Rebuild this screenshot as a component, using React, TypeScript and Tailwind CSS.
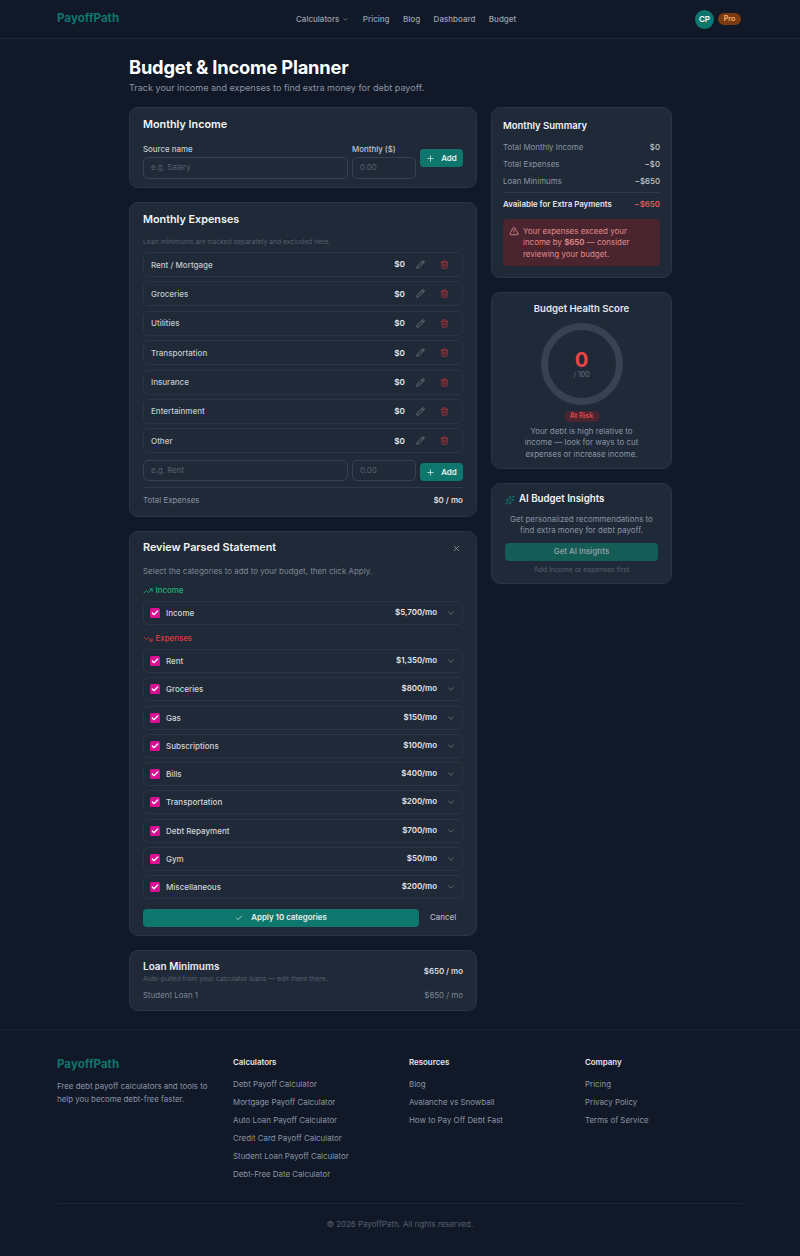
import React from 'react';
import { AlertTriangle, Check, ChevronDown, Pencil, Plus, Sparkles, Trash2, TrendingDown, TrendingUp, X } from 'lucide-react';

const EXPENSES = ['Rent / Mortgage', 'Groceries', 'Utilities', 'Transportation', 'Insurance', 'Entertainment', 'Other'];

const PARSED = [
  { name: 'Rent', amount: '$1,350/mo' },
  { name: 'Groceries', amount: '$800/mo' },
  { name: 'Gas', amount: '$150/mo' },
  { name: 'Subscriptions', amount: '$100/mo' },
  { name: 'Bills', amount: '$400/mo' },
  { name: 'Transportation', amount: '$200/mo' },
  { name: 'Debt Repayment', amount: '$700/mo' },
  { name: 'Gym', amount: '$50/mo' },
  { name: 'Miscellaneous', amount: '$200/mo' },
];

const FOOTER_LINKS = [
  {
    title: 'Calculators',
    links: ['Debt Payoff Calculator', 'Mortgage Payoff Calculator', 'Auto Loan Payoff Calculator', 'Credit Card Payoff Calculator', 'Student Loan Payoff Calculator', 'Debt-Free Date Calculator'],
  },
  { title: 'Resources', links: ['Blog', 'Avalanche vs Snowball', 'How to Pay Off Debt Fast'] },
  { title: 'Company', links: ['Pricing', 'Privacy Policy', 'Terms of Service'] },
];

const Card: React.FC<{ className?: string; children: React.ReactNode }> = ({ className = '', children }) => (
  <div className={`bg-[#1f2937] border border-[#2a3544] rounded-[9px] ${className}`}>{children}</div>
);

const AddButton = () => (
  <button className="flex items-center justify-center gap-[6px] w-[43px] h-[18px] bg-[#0f766e] rounded-[4px] text-[8px] font-semibold text-[#e5f3f0] shrink-0">
    <Plus className="w-[9px] h-[9px]" />
    Add
  </button>
);

const ParsedRow: React.FC<{ name: string; amount: string }> = ({ name, amount }) => (
  <div className="flex items-center h-[24px] border border-[#2a3544] rounded-[5px] pl-[6px] pr-[6px]">
    <span className="flex items-center justify-center w-[10px] h-[10px] bg-[#db0f94] rounded-[1.5px] shrink-0">
      <Check className="w-[8px] h-[8px] text-white" strokeWidth={4} />
    </span>
    <span className="ml-[6px] text-[8px] font-medium text-[#d1d5db]">{name}</span>
    <span className="ml-auto text-[7.9px] font-semibold text-[#e5e7eb]">{amount}</span>
    <ChevronDown className="ml-[9px] w-[10px] h-[10px] text-[#6b7280]" />
  </div>
);

export default function App() {
  return (
    <div className="w-[800px] h-[1256px] overflow-hidden bg-[#111827] font-['Inter',sans-serif] text-[#e5e7eb]">
      <header className="flex items-center h-[39px] px-[57px] border-b border-[#1e2736] relative">
        <span className="text-[11.6px] font-bold text-[#0f766e] w-[239px]">PayoffPath</span>
        <nav className="flex items-center gap-[13.5px] text-[8px] font-medium text-[#9ca3af]">
          <span className="flex items-center gap-[3px]">Calculators <ChevronDown className="w-[7px] h-[7px]" /></span>
          <span>Pricing</span>
          <span>Blog</span>
          <span>Dashboard</span>
          <span>Budget</span>
        </nav>
        <div className="ml-auto mr-[2px] flex items-center gap-[4px]">
          <span className="flex items-center justify-center w-[19px] h-[19px] rounded-full bg-[#0f766e] text-[8px] font-semibold text-white">CP</span>
          <span className="flex items-center justify-center w-[23px] h-[12px] rounded-full bg-[#7c3a10] text-[7px] font-semibold text-[#fdba74]">Pro</span>
        </div>
      </header>

      <main className="w-[543px] ml-[129px] pt-[18px]">
        <h1 className="text-[18.3px] leading-[20px] font-bold text-white tracking-[-0.2px]">Budget &amp; Income Planner</h1>
        <p className="mt-[4px] text-[9.05px] leading-[13px] text-[#8b95a5]">Track your income and expenses to find extra money for debt payoff.</p>

        <div className="flex gap-[14px] mt-[13px] items-start">
          <div className="w-[348px] flex flex-col gap-[14px]">
            <Card className="h-[81px] px-[13px] pt-[10px]">
              <h2 className="text-[10.8px] leading-[14px] font-semibold text-[#f3f4f6]">Monthly Income</h2>
              <div className="flex items-end mt-[12px]">
                <div className="w-[205px]">
                  <label className="block text-[7.9px] leading-[10px] font-medium text-[#c4c9d1] mb-[3px]">Source name</label>
                  <div className="h-[22px] border border-[#374151] rounded-[5px] flex items-center px-[7px] text-[7.9px] text-[#566070]">e.g. Salary</div>
                </div>
                <div className="w-[64px] ml-[4px]">
                  <label className="block text-[7.9px] leading-[10px] font-medium text-[#c4c9d1] mb-[3px]">Monthly ($)</label>
                  <div className="h-[22px] border border-[#374151] rounded-[5px] flex items-center px-[7px] text-[7.9px] text-[#566070]">0.00</div>
                </div>
                <div className="ml-[4px] mb-[12px]"><AddButton /></div>
              </div>
            </Card>

            <Card className="h-[315px] px-[13px] pt-[10px]">
              <h2 className="text-[10.8px] leading-[14px] font-semibold text-[#f3f4f6]">Monthly Expenses</h2>
              <p className="mt-[10px] text-[6.8px] leading-[10px] text-[#566070]">Loan minimums are tracked separately and excluded here.</p>
              <div className="mt-[5px] flex flex-col gap-[4.4px]">
                {EXPENSES.map((name) => (
                  <div key={name} className="flex items-center h-[25px] border border-[#2a3544] rounded-[5px] px-[7px]">
                    <span className="text-[8px] font-medium text-[#c4c9d1]">{name}</span>
                    <span className="ml-auto text-[8.2px] font-semibold text-[#e5e7eb]">$0</span>
                    <Pencil className="ml-[11px] w-[9px] h-[9px] text-[#6b7280]" strokeWidth={2.5} />
                    <Trash2 className="ml-[15px] mr-[6px] w-[9px] h-[9px] text-[#a8323a]" strokeWidth={2.5} />
                  </div>
                ))}
              </div>
              <div className="flex items-start mt-[7px]">
                <div className="w-[205px] h-[21px] border border-[#374151] rounded-[5px] flex items-center px-[7px] text-[7.9px] text-[#566070]">e.g. Rent</div>
                <div className="w-[64px] ml-[4px] h-[21px] border border-[#374151] rounded-[5px] flex items-center px-[7px] text-[7.9px] text-[#566070]">0.00</div>
                <div className="ml-[4px] mt-[3px]"><AddButton /></div>
              </div>
              <div className="flex items-center justify-between mt-[6px] pt-[7px] border-t border-[#2f3a49]">
                <span className="text-[7.9px] leading-[11px] text-[#8b95a5]">Total Expenses</span>
                <span className="text-[8px] leading-[11px] font-semibold text-[#d9dde3]">$0 / mo</span>
              </div>
            </Card>

            <Card className="h-[405px] px-[13px] pt-[9px]">
              <div className="flex items-center justify-between h-[14px]">
                <h2 className="text-[10.8px] font-semibold text-[#f3f4f6]">Review Parsed Statement</h2>
                <X className="mr-[2px] w-[9px] h-[9px] text-[#9ca3af]" />
              </div>
              <p className="mt-[11px] text-[7.95px] leading-[11px] text-[#7d8796]">Select the categories to add to your budget, then click Apply.</p>
              <div className="mt-[9px] flex items-center gap-[2.5px] h-[10px] text-[7.9px] font-medium text-[#22b378]">
                <TrendingUp className="w-[10px] h-[10px]" /> Income
              </div>
              <div className="mt-[5px]"><ParsedRow name="Income" amount="$5,700/mo" /></div>
              <div className="mt-[9px] flex items-center gap-[2.5px] h-[10px] text-[7.9px] font-medium text-[#dc3f3f]">
                <TrendingDown className="w-[10px] h-[10px]" /> Expenses
              </div>
              <div className="mt-[5px] flex flex-col gap-[4.25px]">
                {PARSED.map((p) => <ParsedRow key={p.name} name={p.name} amount={p.amount} />)}
              </div>
              <div className="flex items-center mt-[10px]">
                <button className="flex items-center justify-center gap-[8px] w-[276px] h-[18px] bg-[#0f766e] rounded-[4px] text-[7.9px] font-semibold text-[#e5f3f0]">
                  <Check className="w-[8px] h-[8px]" /> Apply 10 categories
                </button>
                <span className="ml-[11px] text-[7.9px] font-medium text-[#b0b6bf]">Cancel</span>
              </div>
            </Card>

            <Card className="h-[61px] px-[13px] pt-[9px]">
              <div className="flex items-center justify-between">
                <div>
                  <h2 className="text-[10px] leading-[13px] font-semibold text-[#eef0f3]">Loan Minimums</h2>
                  <p className="mt-[1px] text-[6.8px] leading-[10px] text-[#566070]">Auto-pulled from your calculator loans — edit them there.</p>
                </div>
                <span className="text-[7.9px] font-semibold text-[#d9dde3]">$650 / mo</span>
              </div>
              <div className="flex items-center justify-between mt-[6px] text-[7.9px] leading-[11px] text-[#7d8796]">
                <span>Student Loan 1</span>
                <span>$650 / mo</span>
              </div>
            </Card>
          </div>

          <div className="w-[181px] flex flex-col gap-[14px]">
            <Card className="h-[171px] px-[11px] pt-[11px]">
              <h2 className="text-[9.5px] leading-[13px] font-semibold text-[#f3f4f6]">Monthly Summary</h2>
              <div className="mt-[7px] flex flex-col text-[7.9px] leading-[17px]">
                <div className="flex justify-between"><span className="text-[#8b95a5]">Total Monthly Income</span><span className="text-[#c4c9d1] font-medium">$0</span></div>
                <div className="flex justify-between"><span className="text-[#8b95a5]">Total Expenses</span><span className="text-[#c4c9d1] font-medium">−$0</span></div>
                <div className="flex justify-between"><span className="text-[#8b95a5]">Loan Minimums</span><span className="text-[#c4c9d1] font-medium">−$650</span></div>
              </div>
              <div className="flex justify-between mt-[2px] pt-[5px] border-t border-[#2f3a49] text-[7.9px] leading-[12px] font-semibold">
                <span className="text-[#e5e7eb]">Available for Extra Payments</span>
                <span className="text-[#e05a5a]">−$650</span>
              </div>
              <div className="flex gap-[4px] mt-[9px] h-[47px] rounded-[4px] bg-[#4a2530] px-[6px] pt-[7px] text-[7.95px] leading-[11.3px] text-[#e08a8a]">
                <AlertTriangle className="w-[10px] h-[10px] shrink-0" />
                <p>Your expenses exceed your income by <b className="font-semibold">$650</b> — consider reviewing your budget.</p>
              </div>
            </Card>

            <Card className="h-[177px] px-[11px] pt-[9px] flex flex-col items-center">
              <h2 className="text-[9.6px] leading-[13px] font-semibold text-[#e5e7eb]">Budget Health Score</h2>
              <div className="relative w-[82px] h-[82px] mt-[8px] rounded-full border-[7px] border-[#374151] flex flex-col items-center justify-center">
                <span className="text-[20px] leading-[20px] font-bold text-[#ef4444]">0</span>
                <span className="text-[7px] leading-[9px] text-[#6b7280]">/ 100</span>
              </div>
              <span className="mt-[6px] flex items-center justify-center w-[36px] h-[11px] rounded-full bg-[#4a2530] text-[7px] font-semibold text-[#e04848]">At Risk</span>
              <p className="mt-[4px] w-[125px] text-[7.95px] leading-[11.3px] text-[#8b95a5] text-center">Your debt is high relative to income — look for ways to cut expenses or increase income.</p>
            </Card>

            <Card className="h-[101px] px-[13px] pt-[9px]">
              <div className="flex items-center gap-[4px] h-[13px]">
                <Sparkles className="w-[10px] h-[10px] text-[#0f766e]" />
                <h2 className="text-[9.7px] font-semibold text-[#f3f4f6]">AI Budget Insights</h2>
              </div>
              <p className="mt-[8px] text-[7.95px] leading-[11.3px] text-[#8b95a5] text-center">Get personalized recommendations to find extra money for debt payoff.</p>
              <button className="block w-full mt-[6px] h-[18px] rounded-[4px] bg-[#145c56] text-[7.9px] font-semibold text-[#8a9ea0]">Get AI Insights</button>
              <p className="mt-[4px] text-[6.9px] leading-[10px] text-[#566070] text-center">Add income or expenses first</p>
            </Card>
          </div>
        </div>
      </main>

      <footer className="mt-[18px] border-t border-[#1a2332] px-[57px] pt-[27px]">
        <div className="grid grid-cols-4 gap-[18px] h-[146px]">
          <div>
            <div className="text-[11.6px] leading-[14px] font-bold text-[#0f766e]">PayoffPath</div>
            <p className="mt-[9px] w-[158px] text-[7.9px] leading-[13px] text-[#8b95a5]">Free debt payoff calculators and tools to help you become debt-free faster.</p>
          </div>
          {FOOTER_LINKS.map((col) => (
            <div key={col.title}>
              <h3 className="text-[7.9px] leading-[11px] font-semibold text-[#e5e7eb]">{col.title}</h3>
              <ul className="mt-[11px] flex flex-col gap-[7px] text-[7.9px] leading-[11px] text-[#8b95a5]">
                {col.links.map((l) => <li key={l}>{l}</li>)}
              </ul>
            </div>
          ))}
        </div>
        <div className="border-t border-[#1a2332] pt-[15px] text-center text-[7.9px] leading-[11px] text-[#566070]">© 2026 PayoffPath. All rights reserved.</div>
      </footer>
    </div>
  );
}
